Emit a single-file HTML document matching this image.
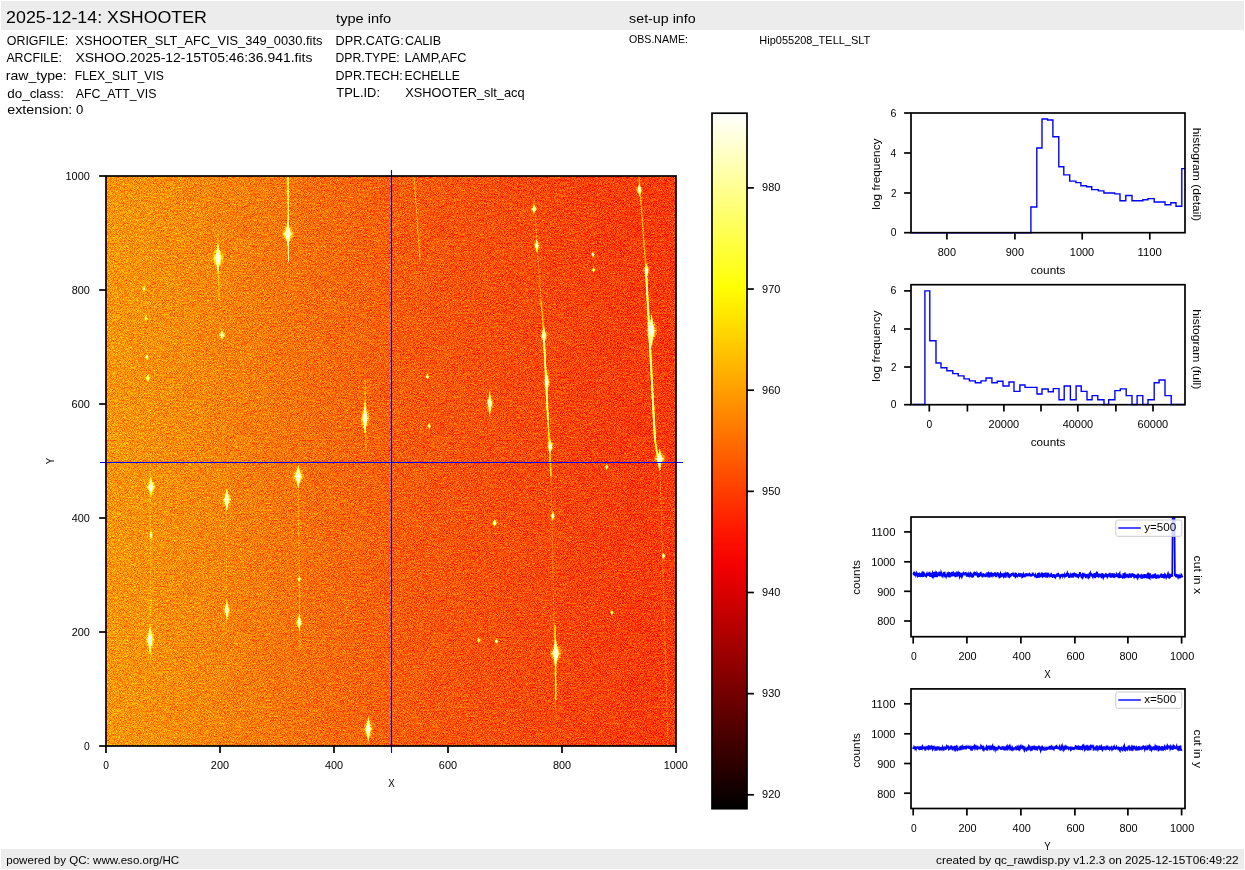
<!DOCTYPE html><html><head><meta charset="utf-8"><style>html,body{margin:0;padding:0;background:#fff;width:1245px;height:870px;overflow:hidden}svg{display:block;will-change:transform}text{font-family:"Liberation Sans",sans-serif}</style></head><body><svg width="1245" height="870" viewBox="0 0 1245 870" font-family="Liberation Sans, sans-serif">
<defs>
<linearGradient id="cbar" x1="0" y1="0" x2="0" y2="1"><stop offset="0.000" stop-color="#ffffff"/><stop offset="0.050" stop-color="#ffffcd"/><stop offset="0.100" stop-color="#ffff9b"/><stop offset="0.150" stop-color="#ffff68"/><stop offset="0.200" stop-color="#ffff36"/><stop offset="0.250" stop-color="#ffff04"/><stop offset="0.300" stop-color="#ffe000"/><stop offset="0.350" stop-color="#ffbf00"/><stop offset="0.400" stop-color="#ff9d00"/><stop offset="0.450" stop-color="#ff7c00"/><stop offset="0.500" stop-color="#ff5a00"/><stop offset="0.550" stop-color="#ff3900"/><stop offset="0.600" stop-color="#ff1700"/><stop offset="0.650" stop-color="#f40000"/><stop offset="0.700" stop-color="#d20000"/><stop offset="0.750" stop-color="#af0000"/><stop offset="0.800" stop-color="#8c0000"/><stop offset="0.850" stop-color="#690000"/><stop offset="0.900" stop-color="#460000"/><stop offset="0.950" stop-color="#230000"/><stop offset="1.000" stop-color="#000000"/></linearGradient>
<linearGradient id="heat" x1="0" y1="0" x2="1" y2="0"><stop offset="0.000" stop-color="#ffbe00"/><stop offset="0.042" stop-color="#ffb000"/><stop offset="0.165" stop-color="#ff9b00"/><stop offset="0.270" stop-color="#ff8a00"/><stop offset="0.411" stop-color="#ff7600"/><stop offset="0.551" stop-color="#ff6600"/><stop offset="0.691" stop-color="#ff5a00"/><stop offset="0.796" stop-color="#ff5000"/><stop offset="0.902" stop-color="#ff4600"/><stop offset="1.000" stop-color="#ff3e00"/></linearGradient>
<radialGradient id="spot"><stop offset="0" stop-color="#ffffff"/><stop offset="0.35" stop-color="#ffff80"/><stop offset="0.7" stop-color="#ffd000" stop-opacity="0.7"/><stop offset="1" stop-color="#ffb000" stop-opacity="0"/></radialGradient>
<linearGradient id="streakv" x1="0" y1="0" x2="0" y2="1"><stop offset="0" stop-color="#ffe040" stop-opacity="0"/><stop offset="0.5" stop-color="#ffff80" stop-opacity="0.9"/><stop offset="1" stop-color="#ffe040" stop-opacity="0"/></linearGradient>
<filter id="noise" x="0" y="0" width="100%" height="100%"><feTurbulence type="fractalNoise" baseFrequency="0.55" numOctaves="2" seed="3" result="t"/><feColorMatrix type="matrix" values="0 0 0 0 1  0 0 0 0 1  0 0 0 0 0.3  0 -1.6 0 0 0.8"/></filter>
<filter id="noise2" x="0" y="0" width="100%" height="100%"><feTurbulence type="fractalNoise" baseFrequency="0.6" numOctaves="2" seed="11" result="t"/><feColorMatrix type="matrix" values="0 0 0 0 0.85  0 0 0 0 0  0 0 0 0 0  0 1.6 0 0 -0.8"/></filter>
<linearGradient id="heatv" x1="0" y1="0" x2="1" y2="0"><stop offset="0.000" stop-color="#979797"/><stop offset="0.042" stop-color="#959595"/><stop offset="0.165" stop-color="#919191"/><stop offset="0.270" stop-color="#8c8c8c"/><stop offset="0.411" stop-color="#858585"/><stop offset="0.551" stop-color="#7f7f7f"/><stop offset="0.691" stop-color="#7b7b7b"/><stop offset="0.796" stop-color="#787878"/><stop offset="0.902" stop-color="#757575"/><stop offset="1.000" stop-color="#737373"/></linearGradient>
<radialGradient id="spotg"><stop offset="0" stop-color="#fff"/><stop offset="0.4" stop-color="#fff" stop-opacity="0.8"/><stop offset="1" stop-color="#fff" stop-opacity="0"/></radialGradient>
<filter id="hm" x="0" y="0" width="570" height="570" filterUnits="userSpaceOnUse" color-interpolation-filters="sRGB"><feTurbulence type="fractalNoise" baseFrequency="1.3" numOctaves="1" seed="7" result="t"/><feColorMatrix in="t" type="matrix" values="1 0 0 0 0  1 0 0 0 0  1 0 0 0 0  0 0 0 0 1" result="tn"/><feComposite in="SourceGraphic" in2="tn" operator="arithmetic" k1="0" k2="1" k3="0.52" k4="-0.2600" result="v"/><feComponentTransfer in="v"><feFuncR type="table" tableValues="0.000 0.043 0.086 0.128 0.171 0.214 0.257 0.300 0.342 0.385 0.428 0.471 0.514 0.556 0.599 0.642 0.685 0.728 0.770 0.813 0.856 0.899 0.942 0.984 1.000 1.000 1.000 1.000 1.000 1.000 1.000 1.000 1.000 1.000 1.000 1.000 1.000 1.000 1.000 1.000 1.000 1.000 1.000 1.000 1.000 1.000 1.000 1.000 1.000 1.000 1.000 1.000 1.000 1.000 1.000 1.000 1.000 1.000 1.000 1.000 1.000 1.000 1.000 1.000 1.000"/><feFuncG type="table" tableValues="0.000 0.000 0.000 0.000 0.000 0.000 0.000 0.000 0.000 0.000 0.000 0.000 0.000 0.000 0.000 0.000 0.000 0.000 0.000 0.000 0.000 0.000 0.000 0.000 0.026 0.067 0.108 0.149 0.190 0.231 0.272 0.313 0.354 0.395 0.436 0.477 0.518 0.559 0.600 0.641 0.682 0.723 0.764 0.805 0.846 0.887 0.928 0.969 1.000 1.000 1.000 1.000 1.000 1.000 1.000 1.000 1.000 1.000 1.000 1.000 1.000 1.000 1.000 1.000 1.000"/><feFuncB type="table" tableValues="0.000 0.000 0.000 0.000 0.000 0.000 0.000 0.000 0.000 0.000 0.000 0.000 0.000 0.000 0.000 0.000 0.000 0.000 0.000 0.000 0.000 0.000 0.000 0.000 0.000 0.000 0.000 0.000 0.000 0.000 0.000 0.000 0.000 0.000 0.000 0.000 0.000 0.000 0.000 0.000 0.000 0.000 0.000 0.000 0.000 0.000 0.000 0.000 0.016 0.077 0.139 0.200 0.262 0.323 0.385 0.446 0.508 0.569 0.631 0.692 0.754 0.815 0.877 0.938 1.000"/><feFuncA type="identity"/></feComponentTransfer></filter>
</defs>
<rect width="1245" height="870" fill="#fff"/>
<rect x="1" y="1" width="1243" height="29" fill="#ececec"/>
<rect x="1" y="849" width="1243" height="20" fill="#ececec"/>
<text x="6.10" y="23.00" font-size="17.00" textLength="200.89" lengthAdjust="spacingAndGlyphs">2025-12-14: XSHOOTER</text>
<text x="336.08" y="22.80" font-size="13.24" textLength="55.15" lengthAdjust="spacingAndGlyphs">type info</text>
<text x="629.10" y="22.70" font-size="13.24" textLength="66.52" lengthAdjust="spacingAndGlyphs">set-up info</text>
<text x="6.81" y="45.20" font-size="13.24" textLength="61.41" lengthAdjust="spacingAndGlyphs">ORIGFILE:</text>
<text x="75.51" y="45.20" font-size="13.24" textLength="246.92" lengthAdjust="spacingAndGlyphs">XSHOOTER_SLT_AFC_VIS_349_0030.fits</text>
<text x="6.38" y="61.50" font-size="13.24" textLength="55.51" lengthAdjust="spacingAndGlyphs">ARCFILE:</text>
<text x="75.49" y="61.50" font-size="13.24" textLength="236.89" lengthAdjust="spacingAndGlyphs">XSHOO.2025-12-15T05:46:36.941.fits</text>
<text x="5.77" y="80.00" font-size="13.24" textLength="61.03" lengthAdjust="spacingAndGlyphs">raw_type:</text>
<text x="74.80" y="80.00" font-size="13.24" textLength="89.14" lengthAdjust="spacingAndGlyphs">FLEX_SLIT_VIS</text>
<text x="7.24" y="97.60" font-size="13.24" textLength="56.72" lengthAdjust="spacingAndGlyphs">do_class:</text>
<text x="75.78" y="97.60" font-size="13.24" textLength="80.75" lengthAdjust="spacingAndGlyphs">AFC_ATT_VIS</text>
<text x="7.19" y="114.10" font-size="13.24" textLength="65.13" lengthAdjust="spacingAndGlyphs">extension:</text>
<text x="75.99" y="114.10" font-size="13.24" textLength="7.33" lengthAdjust="spacingAndGlyphs">0</text>
<text x="335.57" y="44.90" font-size="13.24" textLength="68.12" lengthAdjust="spacingAndGlyphs">DPR.CATG:</text>
<text x="404.96" y="44.90" font-size="13.24" textLength="36.22" lengthAdjust="spacingAndGlyphs">CALIB</text>
<text x="335.60" y="61.80" font-size="13.24" textLength="64.16" lengthAdjust="spacingAndGlyphs">DPR.TYPE:</text>
<text x="404.59" y="61.80" font-size="13.24" textLength="61.86" lengthAdjust="spacingAndGlyphs">LAMP,AFC</text>
<text x="335.58" y="79.70" font-size="13.24" textLength="67.17" lengthAdjust="spacingAndGlyphs">DPR.TECH:</text>
<text x="404.61" y="79.70" font-size="13.24" textLength="55.24" lengthAdjust="spacingAndGlyphs">ECHELLE</text>
<text x="336.31" y="96.80" font-size="13.24" textLength="43.68" lengthAdjust="spacingAndGlyphs">TPL.ID:</text>
<text x="405.31" y="96.80" font-size="13.24" textLength="119.24" lengthAdjust="spacingAndGlyphs">XSHOOTER_slt_acq</text>
<text x="629.00" y="42.80" font-size="11.04" textLength="58.95" lengthAdjust="spacingAndGlyphs">OBS.NAME:</text>
<text x="759.30" y="44.00" font-size="11.04" textLength="111.04" lengthAdjust="spacingAndGlyphs">Hip055208_TELL_SLT</text>
<text x="6.26" y="863.60" font-size="11.04" textLength="172.91" lengthAdjust="spacingAndGlyphs">powered by QC: www.eso.org/HC</text>
<text x="936.09" y="863.60" font-size="11.04" textLength="302.51" lengthAdjust="spacingAndGlyphs">created by qc_rawdisp.py v1.2.3 on 2025-12-15T06:49:22</text>
<svg x="106" y="176" width="570" height="570" viewBox="0 0 570 570" overflow="hidden">
<g filter="url(#hm)">
<rect width="570" height="570" fill="url(#heatv)"/>
<line x1="182.0" y1="0.0" x2="182.5" y2="86.0" stroke="#fff" stroke-width="1.0" opacity="1.0"/>
<line x1="112.0" y1="54.0" x2="113.0" y2="124.0" stroke="#fff" stroke-width="1.0" opacity="0.25"/>
<line x1="259.0" y1="204.0" x2="260.0" y2="274.0" stroke="#fff" stroke-width="1.0" opacity="0.3"/>
<line x1="533.0" y1="0.0" x2="540.0" y2="94.0" stroke="#fff" stroke-width="1.2" opacity="0.35"/>
<line x1="540.0" y1="94.0" x2="549.0" y2="264.0" stroke="#fff" stroke-width="2.0" opacity="0.85"/>
<line x1="549.0" y1="264.0" x2="554.0" y2="294.0" stroke="#fff" stroke-width="1.6" opacity="0.7"/>
<line x1="554.0" y1="294.0" x2="562.0" y2="570.0" stroke="#fff" stroke-width="1.0" opacity="0.15"/>
<line x1="428.0" y1="24.0" x2="435.0" y2="124.0" stroke="#fff" stroke-width="1.0" opacity="0.2"/>
<line x1="435.0" y1="124.0" x2="437.5" y2="154.0" stroke="#fff" stroke-width="1.2" opacity="0.4"/>
<line x1="437.5" y1="154.0" x2="442.0" y2="244.0" stroke="#fff" stroke-width="1.8" opacity="0.8"/>
<line x1="442.0" y1="244.0" x2="445.0" y2="300.0" stroke="#fff" stroke-width="1.4" opacity="0.55"/>
<line x1="445.0" y1="300.0" x2="450.0" y2="544.0" stroke="#fff" stroke-width="1.0" opacity="0.15"/>
<line x1="192.0" y1="294.0" x2="194.0" y2="474.0" stroke="#fff" stroke-width="1.0" opacity="0.18"/>
<line x1="44.0" y1="294.0" x2="45.0" y2="484.0" stroke="#fff" stroke-width="1.0" opacity="0.15"/>
<line x1="449.0" y1="449.0" x2="450.0" y2="524.0" stroke="#fff" stroke-width="1.4" opacity="0.5"/>
<line x1="308.0" y1="0.0" x2="314.0" y2="84.0" stroke="#fff" stroke-width="1.0" opacity="0.3"/>
<line x1="120.0" y1="314.0" x2="121.0" y2="464.0" stroke="#fff" stroke-width="1.0" opacity="0.12"/>
<ellipse cx="182.0" cy="57.8" rx="6.2" ry="9.2" fill="url(#spotg)" opacity="0.50"/>
<polygon points="182.0,44.2 184.5,57.8 182.0,71.4 179.5,57.8" fill="#fff" opacity="0.85"/>
<polygon points="176.5,57.8 182.0,56.6 187.5,57.8 182.0,59.0" fill="#fff" opacity="0.60"/>
<ellipse cx="182.0" cy="57.8" rx="2.5" ry="4.0" fill="#fff" opacity="1.00"/>
<ellipse cx="112.0" cy="82.0" rx="6.2" ry="10.3" fill="url(#spotg)" opacity="0.50"/>
<polygon points="112.0,66.7 114.5,82.0 112.0,97.3 109.5,82.0" fill="#fff" opacity="0.85"/>
<polygon points="106.5,82.0 112.0,80.8 117.5,82.0 112.0,83.2" fill="#fff" opacity="0.60"/>
<ellipse cx="112.0" cy="82.0" rx="2.5" ry="4.5" fill="#fff" opacity="1.00"/>
<ellipse cx="38.0" cy="113.0" rx="2.5" ry="2.3" fill="url(#spotg)" opacity="0.30"/>
<polygon points="38.0,109.6 39.0,113.0 38.0,116.4 37.0,113.0" fill="#fff" opacity="0.51"/>
<ellipse cx="38.0" cy="113.0" rx="1.2" ry="1.2" fill="#fff" opacity="0.60"/>
<ellipse cx="40.0" cy="142.0" rx="2.5" ry="2.3" fill="url(#spotg)" opacity="0.30"/>
<polygon points="40.0,138.6 41.0,142.0 40.0,145.4 39.0,142.0" fill="#fff" opacity="0.51"/>
<ellipse cx="40.0" cy="142.0" rx="1.2" ry="1.2" fill="#fff" opacity="0.60"/>
<ellipse cx="41.0" cy="181.0" rx="2.5" ry="2.3" fill="url(#spotg)" opacity="0.30"/>
<polygon points="41.0,177.6 42.0,181.0 41.0,184.4 40.0,181.0" fill="#fff" opacity="0.51"/>
<ellipse cx="41.0" cy="181.0" rx="1.2" ry="1.2" fill="#fff" opacity="0.60"/>
<ellipse cx="42.0" cy="202.0" rx="3.1" ry="2.9" fill="url(#spotg)" opacity="0.40"/>
<polygon points="42.0,197.8 43.2,202.0 42.0,206.2 40.8,202.0" fill="#fff" opacity="0.68"/>
<ellipse cx="42.0" cy="202.0" rx="1.2" ry="1.2" fill="#fff" opacity="0.80"/>
<ellipse cx="116.0" cy="159.0" rx="3.8" ry="3.4" fill="url(#spotg)" opacity="0.45"/>
<polygon points="116.0,153.9 117.5,159.0 116.0,164.1 114.5,159.0" fill="#fff" opacity="0.77"/>
<ellipse cx="116.0" cy="159.0" rx="1.5" ry="1.5" fill="#fff" opacity="0.90"/>
<ellipse cx="259.0" cy="242.0" rx="5.0" ry="11.5" fill="url(#spotg)" opacity="0.50"/>
<polygon points="259.0,225.0 261.0,242.0 259.0,259.0 257.0,242.0" fill="#fff" opacity="0.85"/>
<polygon points="254.6,242.0 259.0,240.8 263.4,242.0 259.0,243.2" fill="#fff" opacity="0.60"/>
<ellipse cx="259.0" cy="242.0" rx="2.0" ry="5.0" fill="#fff" opacity="1.00"/>
<ellipse cx="428.0" cy="33.0" rx="3.8" ry="3.4" fill="url(#spotg)" opacity="0.45"/>
<polygon points="428.0,27.9 429.5,33.0 428.0,38.1 426.5,33.0" fill="#fff" opacity="0.77"/>
<ellipse cx="428.0" cy="33.0" rx="1.5" ry="1.5" fill="#fff" opacity="0.90"/>
<ellipse cx="430.8" cy="69.5" rx="3.8" ry="4.6" fill="url(#spotg)" opacity="0.45"/>
<polygon points="430.8,62.7 432.3,69.5 430.8,76.3 429.3,69.5" fill="#fff" opacity="0.77"/>
<ellipse cx="430.8" cy="69.5" rx="1.5" ry="2.0" fill="#fff" opacity="0.90"/>
<ellipse cx="533.4" cy="13.6" rx="3.8" ry="4.6" fill="url(#spotg)" opacity="0.45"/>
<polygon points="533.4,6.8 534.9,13.6 533.4,20.4 531.9,13.6" fill="#fff" opacity="0.77"/>
<ellipse cx="533.4" cy="13.6" rx="1.5" ry="2.0" fill="#fff" opacity="0.90"/>
<ellipse cx="540.6" cy="94.5" rx="3.8" ry="5.8" fill="url(#spotg)" opacity="0.45"/>
<polygon points="540.6,86.0 542.1,94.5 540.6,103.0 539.1,94.5" fill="#fff" opacity="0.77"/>
<ellipse cx="540.6" cy="94.5" rx="1.5" ry="2.5" fill="#fff" opacity="0.90"/>
<ellipse cx="545.6" cy="154.4" rx="6.2" ry="11.5" fill="url(#spotg)" opacity="0.50"/>
<polygon points="545.6,137.4 548.1,154.4 545.6,171.4 543.1,154.4" fill="#fff" opacity="0.85"/>
<polygon points="540.1,154.4 545.6,153.2 551.1,154.4 545.6,155.6" fill="#fff" opacity="0.60"/>
<ellipse cx="545.6" cy="154.4" rx="2.5" ry="5.0" fill="#fff" opacity="1.00"/>
<ellipse cx="553.8" cy="282.7" rx="6.2" ry="6.9" fill="url(#spotg)" opacity="0.50"/>
<polygon points="553.8,272.5 556.3,282.7 553.8,292.9 551.3,282.7" fill="#fff" opacity="0.85"/>
<polygon points="548.3,282.7 553.8,281.5 559.3,282.7 553.8,283.9" fill="#fff" opacity="0.60"/>
<ellipse cx="553.8" cy="282.7" rx="2.5" ry="3.0" fill="#fff" opacity="1.00"/>
<ellipse cx="487.0" cy="78.5" rx="2.5" ry="2.3" fill="url(#spotg)" opacity="0.35"/>
<polygon points="487.0,75.1 488.0,78.5 487.0,81.9 486.0,78.5" fill="#fff" opacity="0.59"/>
<ellipse cx="487.0" cy="78.5" rx="1.2" ry="1.2" fill="#fff" opacity="0.70"/>
<ellipse cx="487.6" cy="94.0" rx="2.5" ry="2.3" fill="url(#spotg)" opacity="0.30"/>
<polygon points="487.6,90.6 488.6,94.0 487.6,97.4 486.6,94.0" fill="#fff" opacity="0.51"/>
<ellipse cx="487.6" cy="94.0" rx="1.2" ry="1.2" fill="#fff" opacity="0.60"/>
<ellipse cx="438.0" cy="159.7" rx="3.8" ry="6.9" fill="url(#spotg)" opacity="0.50"/>
<polygon points="438.0,149.5 439.5,159.7 438.0,169.9 436.5,159.7" fill="#fff" opacity="0.85"/>
<ellipse cx="438.0" cy="159.7" rx="1.5" ry="3.0" fill="#fff" opacity="1.00"/>
<ellipse cx="440.8" cy="206.0" rx="3.8" ry="8.0" fill="url(#spotg)" opacity="0.50"/>
<polygon points="440.8,194.1 442.3,206.0 440.8,217.9 439.3,206.0" fill="#fff" opacity="0.85"/>
<ellipse cx="440.8" cy="206.0" rx="1.5" ry="3.5" fill="#fff" opacity="1.00"/>
<ellipse cx="444.3" cy="270.2" rx="3.8" ry="5.8" fill="url(#spotg)" opacity="0.50"/>
<polygon points="444.3,261.7 445.8,270.2 444.3,278.7 442.8,270.2" fill="#fff" opacity="0.85"/>
<ellipse cx="444.3" cy="270.2" rx="1.5" ry="2.5" fill="#fff" opacity="1.00"/>
<ellipse cx="383.8" cy="227.4" rx="3.8" ry="9.2" fill="url(#spotg)" opacity="0.50"/>
<polygon points="383.8,213.8 385.3,227.4 383.8,241.0 382.3,227.4" fill="#fff" opacity="0.85"/>
<ellipse cx="383.8" cy="227.4" rx="1.5" ry="4.0" fill="#fff" opacity="1.00"/>
<ellipse cx="321.4" cy="200.7" rx="2.5" ry="2.3" fill="url(#spotg)" opacity="0.30"/>
<polygon points="321.4,197.3 322.4,200.7 321.4,204.1 320.4,200.7" fill="#fff" opacity="0.51"/>
<ellipse cx="321.4" cy="200.7" rx="1.2" ry="1.2" fill="#fff" opacity="0.60"/>
<ellipse cx="323.2" cy="249.9" rx="2.5" ry="2.3" fill="url(#spotg)" opacity="0.35"/>
<polygon points="323.2,246.5 324.2,249.9 323.2,253.3 322.2,249.9" fill="#fff" opacity="0.59"/>
<ellipse cx="323.2" cy="249.9" rx="1.2" ry="1.2" fill="#fff" opacity="0.70"/>
<ellipse cx="45.0" cy="310.7" rx="5.0" ry="6.9" fill="url(#spotg)" opacity="0.50"/>
<polygon points="45.0,300.5 47.0,310.7 45.0,320.9 43.0,310.7" fill="#fff" opacity="0.85"/>
<polygon points="40.6,310.7 45.0,309.5 49.4,310.7 45.0,311.9" fill="#fff" opacity="0.60"/>
<ellipse cx="45.0" cy="310.7" rx="2.0" ry="3.0" fill="#fff" opacity="1.00"/>
<ellipse cx="120.9" cy="323.8" rx="5.0" ry="8.0" fill="url(#spotg)" opacity="0.50"/>
<polygon points="120.9,311.9 122.9,323.8 120.9,335.7 118.9,323.8" fill="#fff" opacity="0.85"/>
<polygon points="116.5,323.8 120.9,322.6 125.3,323.8 120.9,325.0" fill="#fff" opacity="0.60"/>
<ellipse cx="120.9" cy="323.8" rx="2.0" ry="3.5" fill="#fff" opacity="1.00"/>
<ellipse cx="192.3" cy="300.4" rx="6.2" ry="8.0" fill="url(#spotg)" opacity="0.50"/>
<polygon points="192.3,288.5 194.8,300.4 192.3,312.3 189.8,300.4" fill="#fff" opacity="0.85"/>
<polygon points="186.8,300.4 192.3,299.2 197.8,300.4 192.3,301.6" fill="#fff" opacity="0.60"/>
<ellipse cx="192.3" cy="300.4" rx="2.5" ry="3.5" fill="#fff" opacity="1.00"/>
<ellipse cx="45.0" cy="359.0" rx="2.5" ry="3.4" fill="url(#spotg)" opacity="0.35"/>
<polygon points="45.0,353.9 46.0,359.0 45.0,364.1 44.0,359.0" fill="#fff" opacity="0.59"/>
<ellipse cx="45.0" cy="359.0" rx="1.2" ry="1.5" fill="#fff" opacity="0.70"/>
<ellipse cx="120.9" cy="434.2" rx="3.8" ry="6.9" fill="url(#spotg)" opacity="0.50"/>
<polygon points="120.9,424.0 122.4,434.2 120.9,444.4 119.4,434.2" fill="#fff" opacity="0.85"/>
<ellipse cx="120.9" cy="434.2" rx="1.5" ry="3.0" fill="#fff" opacity="1.00"/>
<ellipse cx="193.3" cy="446.2" rx="3.8" ry="5.8" fill="url(#spotg)" opacity="0.50"/>
<polygon points="193.3,437.7 194.8,446.2 193.3,454.7 191.8,446.2" fill="#fff" opacity="0.85"/>
<ellipse cx="193.3" cy="446.2" rx="1.5" ry="2.5" fill="#fff" opacity="1.00"/>
<ellipse cx="44.0" cy="463.5" rx="5.0" ry="10.3" fill="url(#spotg)" opacity="0.50"/>
<polygon points="44.0,448.2 46.0,463.5 44.0,478.8 42.0,463.5" fill="#fff" opacity="0.85"/>
<polygon points="39.6,463.5 44.0,462.3 48.4,463.5 44.0,464.7" fill="#fff" opacity="0.60"/>
<ellipse cx="44.0" cy="463.5" rx="2.0" ry="4.5" fill="#fff" opacity="1.00"/>
<ellipse cx="193.3" cy="403.0" rx="2.5" ry="2.3" fill="url(#spotg)" opacity="0.30"/>
<polygon points="193.3,399.6 194.3,403.0 193.3,406.4 192.3,403.0" fill="#fff" opacity="0.51"/>
<ellipse cx="193.3" cy="403.0" rx="1.2" ry="1.2" fill="#fff" opacity="0.60"/>
<ellipse cx="262.3" cy="553.0" rx="5.0" ry="9.2" fill="url(#spotg)" opacity="0.50"/>
<polygon points="262.3,539.4 264.3,553.0 262.3,566.6 260.3,553.0" fill="#fff" opacity="0.85"/>
<polygon points="257.9,553.0 262.3,551.8 266.7,553.0 262.3,554.2" fill="#fff" opacity="0.60"/>
<ellipse cx="262.3" cy="553.0" rx="2.0" ry="4.0" fill="#fff" opacity="1.00"/>
<ellipse cx="388.7" cy="346.9" rx="3.1" ry="2.9" fill="url(#spotg)" opacity="0.45"/>
<polygon points="388.7,342.6 389.9,346.9 388.7,351.1 387.4,346.9" fill="#fff" opacity="0.77"/>
<ellipse cx="388.7" cy="346.9" rx="1.2" ry="1.2" fill="#fff" opacity="0.90"/>
<ellipse cx="446.9" cy="340.0" rx="3.1" ry="3.4" fill="url(#spotg)" opacity="0.45"/>
<polygon points="446.9,334.9 448.1,340.0 446.9,345.1 445.6,340.0" fill="#fff" opacity="0.77"/>
<ellipse cx="446.9" cy="340.0" rx="1.2" ry="1.5" fill="#fff" opacity="0.90"/>
<ellipse cx="557.6" cy="380.0" rx="2.5" ry="2.3" fill="url(#spotg)" opacity="0.45"/>
<polygon points="557.6,376.6 558.6,380.0 557.6,383.4 556.6,380.0" fill="#fff" opacity="0.77"/>
<ellipse cx="557.6" cy="380.0" rx="1.2" ry="1.2" fill="#fff" opacity="0.90"/>
<ellipse cx="505.9" cy="436.6" rx="2.5" ry="2.3" fill="url(#spotg)" opacity="0.30"/>
<polygon points="505.9,433.2 506.9,436.6 505.9,440.0 504.9,436.6" fill="#fff" opacity="0.51"/>
<ellipse cx="505.9" cy="436.6" rx="1.2" ry="1.2" fill="#fff" opacity="0.60"/>
<ellipse cx="390.4" cy="465.2" rx="2.5" ry="2.3" fill="url(#spotg)" opacity="0.35"/>
<polygon points="390.4,461.8 391.4,465.2 390.4,468.6 389.4,465.2" fill="#fff" opacity="0.59"/>
<ellipse cx="390.4" cy="465.2" rx="1.2" ry="1.2" fill="#fff" opacity="0.70"/>
<ellipse cx="372.8" cy="464.2" rx="2.5" ry="2.3" fill="url(#spotg)" opacity="0.30"/>
<polygon points="372.8,460.8 373.8,464.2 372.8,467.6 371.8,464.2" fill="#fff" opacity="0.51"/>
<ellipse cx="372.8" cy="464.2" rx="1.2" ry="1.2" fill="#fff" opacity="0.60"/>
<ellipse cx="449.7" cy="477.3" rx="6.2" ry="10.3" fill="url(#spotg)" opacity="0.50"/>
<polygon points="449.7,462.0 452.2,477.3 449.7,492.6 447.2,477.3" fill="#fff" opacity="0.85"/>
<polygon points="444.2,477.3 449.7,476.1 455.2,477.3 449.7,478.5" fill="#fff" opacity="0.60"/>
<ellipse cx="449.7" cy="477.3" rx="2.5" ry="4.5" fill="#fff" opacity="1.00"/>
<ellipse cx="500.7" cy="291.0" rx="2.5" ry="2.3" fill="url(#spotg)" opacity="0.35"/>
<polygon points="500.7,287.6 501.7,291.0 500.7,294.4 499.7,291.0" fill="#fff" opacity="0.59"/>
<ellipse cx="500.7" cy="291.0" rx="1.2" ry="1.2" fill="#fff" opacity="0.70"/>
</g>
</svg>
<line x1="391.50" y1="170.00" x2="391.50" y2="753.00" stroke="#0000ff" stroke-width="1.1"/>
<line x1="100.00" y1="462.50" x2="683.00" y2="462.50" stroke="#0000ff" stroke-width="1.1"/>
<rect x="106.00" y="176.00" width="570.00" height="570.00" fill="none" stroke="#000" stroke-width="1.7"/>
<line x1="99.10" y1="746.00" x2="106.00" y2="746.00" stroke="#000" stroke-width="1.7"/>
<text x="84.10" y="749.54" font-size="10.30" textLength="5.70" lengthAdjust="spacingAndGlyphs">0</text>
<line x1="106.00" y1="746.00" x2="106.00" y2="752.90" stroke="#000" stroke-width="1.7"/>
<text x="103.15" y="769.20" font-size="10.30" textLength="5.70" lengthAdjust="spacingAndGlyphs">0</text>
<line x1="99.10" y1="632.00" x2="106.00" y2="632.00" stroke="#000" stroke-width="1.7"/>
<text x="71.66" y="635.54" font-size="10.30" textLength="18.17" lengthAdjust="spacingAndGlyphs">200</text>
<line x1="220.00" y1="746.00" x2="220.00" y2="752.90" stroke="#000" stroke-width="1.7"/>
<text x="210.85" y="769.20" font-size="10.30" textLength="18.17" lengthAdjust="spacingAndGlyphs">200</text>
<line x1="99.10" y1="518.00" x2="106.00" y2="518.00" stroke="#000" stroke-width="1.7"/>
<text x="71.72" y="521.54" font-size="10.30" textLength="18.11" lengthAdjust="spacingAndGlyphs">400</text>
<line x1="334.00" y1="746.00" x2="334.00" y2="752.90" stroke="#000" stroke-width="1.7"/>
<text x="325.03" y="769.20" font-size="10.30" textLength="18.11" lengthAdjust="spacingAndGlyphs">400</text>
<line x1="99.10" y1="404.00" x2="106.00" y2="404.00" stroke="#000" stroke-width="1.7"/>
<text x="71.62" y="407.54" font-size="10.30" textLength="18.21" lengthAdjust="spacingAndGlyphs">600</text>
<line x1="448.00" y1="746.00" x2="448.00" y2="752.90" stroke="#000" stroke-width="1.7"/>
<text x="438.83" y="769.20" font-size="10.30" textLength="18.21" lengthAdjust="spacingAndGlyphs">600</text>
<line x1="99.10" y1="290.00" x2="106.00" y2="290.00" stroke="#000" stroke-width="1.7"/>
<text x="71.68" y="293.54" font-size="10.30" textLength="18.14" lengthAdjust="spacingAndGlyphs">800</text>
<line x1="562.00" y1="746.00" x2="562.00" y2="752.90" stroke="#000" stroke-width="1.7"/>
<text x="552.90" y="769.20" font-size="10.30" textLength="18.14" lengthAdjust="spacingAndGlyphs">800</text>
<line x1="99.10" y1="176.00" x2="106.00" y2="176.00" stroke="#000" stroke-width="1.7"/>
<text x="65.55" y="179.54" font-size="10.30" textLength="24.28" lengthAdjust="spacingAndGlyphs">1000</text>
<line x1="676.00" y1="746.00" x2="676.00" y2="752.90" stroke="#000" stroke-width="1.7"/>
<text x="663.66" y="769.20" font-size="10.30" textLength="24.28" lengthAdjust="spacingAndGlyphs">1000</text>
<text x="388.25" y="786.70" font-size="10.30" textLength="6.49" lengthAdjust="spacingAndGlyphs">X</text>
<g transform="translate(53.90,461.00) rotate(-90)"><text x="-3.20" y="0.00" font-size="10.30" textLength="6.40" lengthAdjust="spacingAndGlyphs">Y</text></g>
<rect x="712" y="113.2" width="35" height="695.5" fill="url(#cbar)"/>
<rect x="712.00" y="113.20" width="35.00" height="695.50" fill="none" stroke="#000" stroke-width="1.7"/>
<line x1="747.00" y1="794.80" x2="753.90" y2="794.80" stroke="#000" stroke-width="1.7"/>
<text x="762.09" y="798.34" font-size="10.30" textLength="18.23" lengthAdjust="spacingAndGlyphs">920</text>
<line x1="747.00" y1="693.65" x2="753.90" y2="693.65" stroke="#000" stroke-width="1.7"/>
<text x="762.09" y="697.19" font-size="10.30" textLength="18.23" lengthAdjust="spacingAndGlyphs">930</text>
<line x1="747.00" y1="592.50" x2="753.90" y2="592.50" stroke="#000" stroke-width="1.7"/>
<text x="762.09" y="596.04" font-size="10.30" textLength="18.23" lengthAdjust="spacingAndGlyphs">940</text>
<line x1="747.00" y1="491.35" x2="753.90" y2="491.35" stroke="#000" stroke-width="1.7"/>
<text x="762.09" y="494.89" font-size="10.30" textLength="18.23" lengthAdjust="spacingAndGlyphs">950</text>
<line x1="747.00" y1="390.20" x2="753.90" y2="390.20" stroke="#000" stroke-width="1.7"/>
<text x="762.09" y="393.74" font-size="10.30" textLength="18.23" lengthAdjust="spacingAndGlyphs">960</text>
<line x1="747.00" y1="289.05" x2="753.90" y2="289.05" stroke="#000" stroke-width="1.7"/>
<text x="762.09" y="292.59" font-size="10.30" textLength="18.23" lengthAdjust="spacingAndGlyphs">970</text>
<line x1="747.00" y1="187.90" x2="753.90" y2="187.90" stroke="#000" stroke-width="1.7"/>
<text x="762.09" y="191.44" font-size="10.30" textLength="18.23" lengthAdjust="spacingAndGlyphs">980</text>
<polyline fill="none" stroke="#0000ff" stroke-width="1.39" stroke-linejoin="miter" points="911.0,232.7 1030.9,232.7 1030.9,207.0 1036.8,207.0 1036.8,148.0 1042.0,148.0 1042.0,119.0 1047.6,119.0 1047.6,120.0 1052.9,120.0 1052.9,136.8 1058.8,136.8 1058.8,166.8 1063.8,166.8 1063.8,174.9 1069.7,174.9 1069.7,181.1 1075.9,181.1 1075.9,182.6 1080.9,182.6 1080.9,185.7 1086.5,185.7 1086.5,186.8 1091.7,186.8 1091.7,189.6 1098.4,189.6 1098.4,190.9 1103.9,190.9 1103.9,193.0 1114.7,193.0 1114.7,193.9 1120.0,193.9 1120.0,200.7 1125.8,200.7 1125.8,195.5 1132.0,195.5 1132.0,200.7 1142.9,200.7 1142.9,199.7 1148.0,199.7 1148.0,198.6 1154.2,198.6 1154.2,202.0 1165.0,202.0 1165.0,204.8 1170.8,204.8 1170.8,202.8 1176.0,202.8 1176.0,206.2 1181.8,206.2 1181.8,168.6 1185.0,168.6"/>
<rect x="911.00" y="113.00" width="274.00" height="119.70" fill="none" stroke="#000" stroke-width="1.7"/>
<line x1="904.10" y1="113.00" x2="911.00" y2="113.00" stroke="#000" stroke-width="1.7"/>
<text x="890.57" y="116.54" font-size="10.30" textLength="5.90" lengthAdjust="spacingAndGlyphs">6</text>
<line x1="904.10" y1="153.00" x2="911.00" y2="153.00" stroke="#000" stroke-width="1.7"/>
<text x="890.60" y="156.54" font-size="10.30" textLength="5.70" lengthAdjust="spacingAndGlyphs">4</text>
<line x1="904.10" y1="193.00" x2="911.00" y2="193.00" stroke="#000" stroke-width="1.7"/>
<text x="891.00" y="196.54" font-size="10.30" textLength="5.49" lengthAdjust="spacingAndGlyphs">2</text>
<line x1="904.10" y1="232.70" x2="911.00" y2="232.70" stroke="#000" stroke-width="1.7"/>
<text x="890.70" y="236.24" font-size="10.30" textLength="5.70" lengthAdjust="spacingAndGlyphs">0</text>
<line x1="946.90" y1="232.70" x2="946.90" y2="239.60" stroke="#000" stroke-width="1.7"/>
<text x="937.80" y="255.90" font-size="10.30" textLength="18.14" lengthAdjust="spacingAndGlyphs">800</text>
<line x1="1014.90" y1="232.70" x2="1014.90" y2="239.60" stroke="#000" stroke-width="1.7"/>
<text x="1005.74" y="255.90" font-size="10.30" textLength="18.23" lengthAdjust="spacingAndGlyphs">900</text>
<line x1="1082.20" y1="232.70" x2="1082.20" y2="239.60" stroke="#000" stroke-width="1.7"/>
<text x="1069.86" y="255.90" font-size="10.30" textLength="24.28" lengthAdjust="spacingAndGlyphs">1000</text>
<line x1="1149.80" y1="232.70" x2="1149.80" y2="239.60" stroke="#000" stroke-width="1.7"/>
<text x="1137.46" y="255.90" font-size="10.30" textLength="24.28" lengthAdjust="spacingAndGlyphs">1100</text>
<text x="1030.70" y="273.80" font-size="11.04" textLength="34.67" lengthAdjust="spacingAndGlyphs">counts</text>
<g transform="translate(880.00,173.70) rotate(-90)"><text x="-36.00" y="0.00" font-size="11.04" textLength="71.22" lengthAdjust="spacingAndGlyphs">log frequency</text></g>
<g transform="translate(1193.00,174.50) rotate(90)"><text x="-46.69" y="0.00" font-size="11.04" textLength="93.30" lengthAdjust="spacingAndGlyphs">histogram (detail)</text></g>
<polyline fill="none" stroke="#0000ff" stroke-width="1.39" points="912.8,404.5 924.9,404.5 924.9,290.9 929.8,290.9 929.8,340.8 936.0,340.8 936.0,363.0 941.0,363.0 941.0,367.7 946.9,367.7 946.9,370.8 952.8,370.8 952.8,373.6 958.2,373.6 958.2,375.9 964.0,375.9 964.0,378.9 969.4,378.9 969.4,380.9 975.3,380.9 975.3,382.7 981.0,382.7 981.0,380.9 986.0,380.9 986.0,378.0 991.9,378.0 991.9,382.7 997.3,382.7 997.3,381.2 1003.0,381.2 1003.0,386.0 1009.0,386.0 1009.0,382.0 1014.0,382.0 1014.0,391.4 1019.9,391.4 1019.9,385.0 1025.0,385.0 1025.0,387.4 1037.0,387.4 1037.0,394.0 1042.0,394.0 1042.0,389.0 1048.2,389.0 1048.2,391.7 1053.3,391.7 1053.3,388.6 1059.0,388.6 1059.0,399.8 1064.2,399.8 1064.2,386.0 1070.4,386.0 1070.4,399.8 1076.1,399.8 1076.1,386.0 1081.2,386.0 1081.2,391.4 1087.0,391.4 1087.0,399.8 1092.1,399.8 1092.1,395.6 1097.8,395.6 1097.8,399.8 1104.0,399.8 1104.0,404.5 1108.7,404.5 1108.7,399.8 1114.9,399.8 1114.9,390.6 1120.3,390.6 1120.3,388.9 1126.2,388.9 1126.2,395.6 1132.0,395.6 1132.0,404.5 1137.1,404.5 1137.1,395.6 1142.8,395.6 1142.8,404.5 1148.0,404.5 1148.0,399.8 1154.2,399.8 1154.2,382.7 1159.1,382.7 1159.1,380.0 1165.0,380.0 1165.0,395.6 1171.2,395.6 1171.2,404.5 1185.0,404.5"/>
<rect x="911.00" y="284.70" width="274.00" height="120.00" fill="none" stroke="#000" stroke-width="1.7"/>
<line x1="904.10" y1="290.90" x2="911.00" y2="290.90" stroke="#000" stroke-width="1.7"/>
<text x="890.57" y="294.44" font-size="10.30" textLength="5.90" lengthAdjust="spacingAndGlyphs">6</text>
<line x1="904.10" y1="329.00" x2="911.00" y2="329.00" stroke="#000" stroke-width="1.7"/>
<text x="890.60" y="332.54" font-size="10.30" textLength="5.70" lengthAdjust="spacingAndGlyphs">4</text>
<line x1="904.10" y1="367.00" x2="911.00" y2="367.00" stroke="#000" stroke-width="1.7"/>
<text x="891.00" y="370.54" font-size="10.30" textLength="5.49" lengthAdjust="spacingAndGlyphs">2</text>
<line x1="904.10" y1="404.70" x2="911.00" y2="404.70" stroke="#000" stroke-width="1.7"/>
<text x="890.70" y="408.24" font-size="10.30" textLength="5.70" lengthAdjust="spacingAndGlyphs">0</text>
<line x1="929.30" y1="404.70" x2="929.30" y2="411.60" stroke="#000" stroke-width="1.7"/>
<text x="926.45" y="427.90" font-size="10.30" textLength="5.70" lengthAdjust="spacingAndGlyphs">0</text>
<line x1="967.40" y1="404.70" x2="967.40" y2="411.60" stroke="#000" stroke-width="1.7"/>
<line x1="1003.90" y1="404.70" x2="1003.90" y2="411.60" stroke="#000" stroke-width="1.7"/>
<text x="988.57" y="427.90" font-size="10.30" textLength="30.54" lengthAdjust="spacingAndGlyphs">20000</text>
<line x1="1041.00" y1="404.70" x2="1041.00" y2="411.60" stroke="#000" stroke-width="1.7"/>
<line x1="1077.80" y1="404.70" x2="1077.80" y2="411.60" stroke="#000" stroke-width="1.7"/>
<text x="1062.65" y="427.90" font-size="10.30" textLength="30.48" lengthAdjust="spacingAndGlyphs">40000</text>
<line x1="1115.90" y1="404.70" x2="1115.90" y2="411.60" stroke="#000" stroke-width="1.7"/>
<line x1="1153.00" y1="404.70" x2="1153.00" y2="411.60" stroke="#000" stroke-width="1.7"/>
<text x="1137.64" y="427.90" font-size="10.30" textLength="30.58" lengthAdjust="spacingAndGlyphs">60000</text>
<text x="1030.70" y="445.80" font-size="11.04" textLength="34.67" lengthAdjust="spacingAndGlyphs">counts</text>
<g transform="translate(880.00,345.70) rotate(-90)"><text x="-36.00" y="0.00" font-size="11.04" textLength="71.22" lengthAdjust="spacingAndGlyphs">log frequency</text></g>
<g transform="translate(1193.00,349.30) rotate(90)"><text x="-40.08" y="0.00" font-size="11.04" textLength="80.08" lengthAdjust="spacingAndGlyphs">histogram (full)</text></g>
<svg x="911" y="517" width="274" height="119.7" overflow="hidden">
<polyline fill="none" stroke="#0000ff" stroke-width="1.75" points="2.2,55.7 2.5,55.8 2.7,58.2 3.0,54.7 3.3,57.1 3.5,54.7 3.8,58.8 4.1,57.6 4.4,59.1 4.6,56.6 4.9,57.9 5.2,56.9 5.4,56.3 5.7,57.5 6.0,55.6 6.2,56.9 6.5,58.3 6.8,57.4 7.0,56.8 7.3,59.9 7.6,57.4 7.9,56.5 8.1,57.6 8.4,56.6 8.7,56.8 8.9,56.9 9.2,60.0 9.5,57.4 9.7,57.6 10.0,58.3 10.3,60.0 10.5,57.1 10.8,56.5 11.1,60.0 11.3,55.4 11.6,56.9 11.9,58.3 12.2,60.0 12.4,56.1 12.7,54.8 13.0,58.3 13.2,56.7 13.5,56.9 13.8,58.0 14.0,57.7 14.3,57.8 14.6,56.8 14.8,59.1 15.1,59.4 15.4,57.4 15.7,56.8 15.9,58.4 16.2,58.0 16.5,56.0 16.7,56.8 17.0,58.8 17.3,57.3 17.5,57.0 17.8,57.7 18.1,57.4 18.3,57.4 18.6,54.8 18.9,59.8 19.2,57.7 19.4,56.2 19.7,58.8 20.0,57.8 20.2,57.5 20.5,58.8 20.8,60.0 21.0,58.2 21.3,59.6 21.6,60.0 21.8,56.1 22.1,56.7 22.4,58.5 22.6,55.1 22.9,57.1 23.2,59.2 23.5,58.9 23.7,58.2 24.0,54.9 24.3,60.1 24.5,58.2 24.8,58.5 25.1,58.1 25.3,55.2 25.6,55.5 25.9,55.8 26.1,60.1 26.4,56.4 26.7,57.2 27.0,57.1 27.2,58.3 27.5,58.2 27.8,57.8 28.0,55.8 28.3,54.9 28.6,57.7 28.8,57.9 29.1,59.2 29.4,57.4 29.6,56.7 29.9,58.1 30.2,55.4 30.5,56.1 30.7,56.2 31.0,57.9 31.3,60.1 31.5,58.5 31.8,59.1 32.1,57.8 32.3,57.9 32.6,56.9 32.9,57.1 33.1,54.9 33.4,55.9 33.7,55.8 33.9,58.7 34.2,58.4 34.5,59.1 34.8,59.6 35.0,57.1 35.3,59.0 35.6,60.1 35.8,57.5 36.1,59.0 36.4,57.3 36.6,55.4 36.9,57.7 37.2,56.4 37.4,57.7 37.7,56.9 38.0,58.0 38.3,55.0 38.5,60.2 38.8,59.4 39.1,57.1 39.3,56.3 39.6,57.6 39.9,58.5 40.1,58.2 40.4,58.1 40.7,55.0 40.9,56.1 41.2,59.4 41.5,57.9 41.8,55.5 42.0,56.4 42.3,55.6 42.6,56.2 42.8,59.2 43.1,57.3 43.4,59.1 43.6,57.9 43.9,55.6 44.2,56.7 44.4,60.2 44.7,56.6 45.0,56.2 45.2,59.3 45.5,57.7 45.8,57.6 46.1,59.6 46.3,55.2 46.6,58.2 46.9,56.2 47.1,55.7 47.4,56.5 47.7,59.2 47.9,57.4 48.2,55.1 48.5,56.1 48.7,59.7 49.0,59.1 49.3,56.1 49.6,60.2 49.8,57.1 50.1,56.0 50.4,57.5 50.6,58.9 50.9,59.9 51.2,59.1 51.4,57.1 51.7,56.9 52.0,55.7 52.2,57.6 52.5,56.8 52.8,58.0 53.1,55.9 53.3,57.0 53.6,56.5 53.9,56.0 54.1,56.0 54.4,56.3 54.7,56.1 54.9,58.5 55.2,57.8 55.5,55.9 55.7,58.4 56.0,58.1 56.3,59.7 56.6,57.4 56.8,57.4 57.1,56.8 57.4,57.9 57.6,58.4 57.9,58.0 58.2,57.4 58.4,58.5 58.7,57.8 59.0,58.1 59.2,56.4 59.5,58.0 59.8,56.3 60.0,56.6 60.3,58.0 60.6,60.3 60.9,59.1 61.1,57.7 61.4,57.5 61.7,59.1 61.9,59.6 62.2,59.4 62.5,57.5 62.7,58.0 63.0,57.3 63.3,57.4 63.5,56.6 63.8,57.4 64.1,55.2 64.4,56.1 64.6,58.3 64.9,56.5 65.2,58.5 65.4,56.0 65.7,57.3 66.0,58.3 66.2,56.3 66.5,56.8 66.8,60.4 67.0,56.8 67.3,56.8 67.6,57.0 67.9,57.8 68.1,57.7 68.4,59.1 68.7,58.9 68.9,57.2 69.2,57.3 69.5,55.8 69.7,55.7 70.0,56.8 70.3,58.8 70.5,58.0 70.8,58.9 71.1,59.1 71.3,57.6 71.6,60.4 71.9,57.1 72.2,57.0 72.4,57.2 72.7,59.4 73.0,57.6 73.2,56.8 73.5,58.4 73.8,59.4 74.0,57.7 74.3,57.5 74.6,59.3 74.8,59.2 75.1,59.1 75.4,56.8 75.7,58.2 75.9,58.3 76.2,55.4 76.5,59.5 76.7,58.0 77.0,57.4 77.3,60.5 77.5,58.1 77.8,56.9 78.1,57.8 78.3,58.6 78.6,59.0 78.9,57.8 79.2,56.7 79.4,56.9 79.7,56.7 80.0,56.4 80.2,57.8 80.5,57.2 80.8,58.0 81.0,56.7 81.3,56.7 81.6,57.6 81.8,57.4 82.1,59.5 82.4,56.6 82.6,58.2 82.9,57.8 83.2,56.1 83.5,58.9 83.7,58.1 84.0,55.3 84.3,58.7 84.5,59.2 84.8,56.8 85.1,60.2 85.3,58.1 85.6,56.3 85.9,58.7 86.1,57.4 86.4,56.1 86.7,55.3 87.0,58.3 87.2,56.9 87.5,58.8 87.8,58.5 88.0,57.2 88.3,57.2 88.6,60.4 88.8,60.3 89.1,59.0 89.4,57.5 89.6,56.6 89.9,57.4 90.2,60.2 90.5,58.6 90.7,57.6 91.0,56.3 91.3,58.2 91.5,56.7 91.8,58.0 92.1,59.0 92.3,59.4 92.6,58.2 92.9,57.5 93.1,58.3 93.4,60.4 93.7,58.5 94.0,56.1 94.2,60.1 94.5,58.3 94.8,60.6 95.0,57.3 95.3,57.9 95.6,57.6 95.8,58.5 96.1,57.2 96.4,56.0 96.6,55.4 96.9,57.8 97.2,57.3 97.4,57.2 97.7,60.6 98.0,59.1 98.3,59.5 98.5,57.3 98.8,58.4 99.1,57.7 99.3,57.7 99.6,59.0 99.9,58.8 100.1,58.4 100.4,58.2 100.7,56.0 100.9,57.0 101.2,58.6 101.5,57.5 101.8,57.0 102.0,58.5 102.3,56.8 102.6,57.1 102.8,59.3 103.1,57.5 103.4,60.0 103.6,58.8 103.9,59.2 104.2,59.6 104.4,55.5 104.7,57.9 105.0,56.3 105.3,57.4 105.5,57.9 105.8,59.8 106.1,58.0 106.3,60.3 106.6,57.3 106.9,58.0 107.1,58.2 107.4,59.4 107.7,58.0 107.9,57.2 108.2,57.6 108.5,56.2 108.7,59.8 109.0,59.1 109.3,58.7 109.6,58.5 109.8,57.3 110.1,57.5 110.4,59.2 110.6,57.0 110.9,57.0 111.2,60.3 111.4,60.2 111.7,58.5 112.0,58.8 112.2,58.4 112.5,60.1 112.8,57.5 113.1,58.2 113.3,58.8 113.6,60.1 113.9,57.8 114.1,58.4 114.4,57.5 114.7,57.2 114.9,57.2 115.2,58.2 115.5,59.3 115.7,57.2 116.0,57.3 116.3,57.6 116.6,58.6 116.8,59.1 117.1,56.4 117.4,58.6 117.6,56.8 117.9,59.1 118.2,56.8 118.4,56.7 118.7,57.2 119.0,58.1 119.2,56.8 119.5,58.5 119.8,58.4 120.0,58.3 120.3,58.5 120.6,59.4 120.9,57.2 121.1,58.2 121.4,58.1 121.7,55.6 121.9,58.7 122.2,57.1 122.5,57.2 122.7,57.6 123.0,58.3 123.3,58.6 123.5,58.8 123.8,57.3 124.1,59.1 124.4,58.8 124.6,57.7 124.9,58.2 125.2,59.3 125.4,58.8 125.7,59.2 126.0,58.4 126.2,59.8 126.5,60.8 126.8,58.8 127.0,56.1 127.3,60.6 127.6,57.5 127.9,56.4 128.1,55.6 128.4,58.8 128.7,59.7 128.9,59.6 129.2,57.7 129.5,60.2 129.7,58.1 130.0,57.4 130.3,58.3 130.5,58.5 130.8,58.3 131.1,58.8 131.3,55.6 131.6,60.4 131.9,57.5 132.2,59.1 132.4,57.2 132.7,58.5 133.0,58.0 133.2,56.1 133.5,58.8 133.8,59.1 134.0,56.8 134.3,55.7 134.6,57.4 134.8,57.1 135.1,58.4 135.4,58.3 135.7,60.5 135.9,59.2 136.2,57.9 136.5,58.5 136.7,55.7 137.0,57.1 137.3,57.0 137.5,58.1 137.8,58.7 138.1,58.6 138.3,59.6 138.6,57.4 138.9,58.7 139.2,58.1 139.4,58.3 139.7,58.7 140.0,57.9 140.2,58.6 140.5,58.3 140.8,59.7 141.0,58.2 141.3,58.7 141.6,60.9 141.8,59.2 142.1,59.0 142.4,59.8 142.7,57.0 142.9,59.3 143.2,59.3 143.5,58.9 143.7,59.7 144.0,59.4 144.3,59.9 144.5,57.5 144.8,58.9 145.1,57.6 145.3,60.0 145.6,58.5 145.9,56.6 146.1,58.5 146.4,57.0 146.7,59.7 147.0,57.9 147.2,55.8 147.5,57.8 147.8,59.7 148.0,58.8 148.3,57.5 148.6,59.2 148.8,59.2 149.1,60.4 149.4,59.6 149.6,58.9 149.9,57.3 150.2,58.8 150.5,58.8 150.7,58.4 151.0,59.0 151.3,56.8 151.5,59.2 151.8,58.4 152.1,58.9 152.3,58.3 152.6,58.0 152.9,58.8 153.1,59.5 153.4,58.0 153.7,58.9 154.0,57.4 154.2,59.0 154.5,58.4 154.8,56.7 155.0,60.0 155.3,57.2 155.6,58.5 155.8,56.7 156.1,56.1 156.4,59.3 156.6,56.6 156.9,55.8 157.2,58.2 157.4,56.4 157.7,58.2 158.0,60.9 158.3,57.9 158.5,58.9 158.8,59.2 159.1,58.8 159.3,58.3 159.6,60.5 159.9,58.4 160.1,58.9 160.4,58.6 160.7,56.7 160.9,58.9 161.2,58.5 161.5,59.3 161.8,59.4 162.0,60.6 162.3,55.9 162.6,57.7 162.8,57.8 163.1,57.3 163.4,59.0 163.6,58.4 163.9,58.7 164.2,56.3 164.4,57.2 164.7,58.4 165.0,57.9 165.3,57.7 165.5,58.3 165.8,58.1 166.1,57.1 166.3,60.7 166.6,57.6 166.9,59.4 167.1,59.3 167.4,59.8 167.7,57.8 167.9,57.2 168.2,59.1 168.5,58.9 168.7,55.9 169.0,55.9 169.3,57.8 169.6,58.0 169.8,58.2 170.1,59.1 170.4,57.2 170.6,61.1 170.9,59.7 171.2,60.3 171.4,58.9 171.7,55.9 172.0,58.9 172.2,57.8 172.5,59.1 172.8,58.4 173.1,59.4 173.3,57.4 173.6,58.1 173.9,58.6 174.1,57.6 174.4,58.0 174.7,59.4 174.9,61.1 175.2,58.3 175.5,59.7 175.7,57.1 176.0,58.0 176.3,59.0 176.6,59.4 176.8,57.2 177.1,59.4 177.4,58.8 177.6,60.3 177.9,59.8 178.2,59.3 178.4,58.1 178.7,58.9 179.0,57.5 179.2,57.5 179.5,56.1 179.8,56.9 180.1,56.9 180.3,58.5 180.6,58.7 180.9,56.8 181.1,58.5 181.4,59.2 181.7,59.8 181.9,58.5 182.2,58.9 182.5,58.1 182.7,59.9 183.0,56.5 183.3,58.9 183.5,56.0 183.8,60.9 184.1,59.9 184.4,56.0 184.6,57.9 184.9,56.8 185.2,56.3 185.4,58.1 185.7,57.5 186.0,60.0 186.2,58.0 186.5,57.2 186.8,58.5 187.0,59.2 187.3,59.7 187.6,59.3 187.9,56.7 188.1,57.6 188.4,58.4 188.7,57.5 188.9,59.6 189.2,58.2 189.5,58.6 189.7,58.2 190.0,58.7 190.3,56.7 190.5,61.3 190.8,57.9 191.1,57.7 191.4,56.3 191.6,58.6 191.9,56.8 192.2,59.1 192.4,60.3 192.7,59.5 193.0,58.1 193.2,60.4 193.5,58.4 193.8,58.6 194.0,58.8 194.3,58.1 194.6,59.3 194.8,57.1 195.1,56.3 195.4,60.3 195.7,57.7 195.9,58.2 196.2,59.2 196.5,58.1 196.7,57.1 197.0,58.4 197.3,57.5 197.5,59.4 197.8,58.1 198.1,58.4 198.3,59.7 198.6,56.7 198.9,56.7 199.2,59.7 199.4,60.4 199.7,58.9 200.0,57.8 200.2,60.4 200.5,59.4 200.8,60.1 201.0,56.3 201.3,58.6 201.6,57.4 201.8,57.3 202.1,59.5 202.4,59.7 202.7,58.1 202.9,58.4 203.2,60.6 203.5,59.6 203.7,58.6 204.0,59.4 204.3,58.9 204.5,57.1 204.8,58.1 205.1,59.1 205.3,59.6 205.6,57.2 205.9,57.7 206.1,58.0 206.4,56.8 206.7,60.2 207.0,59.4 207.2,60.5 207.5,56.2 207.8,57.7 208.0,61.2 208.3,56.9 208.6,56.4 208.8,59.1 209.1,60.9 209.4,59.7 209.6,57.5 209.9,59.5 210.2,59.4 210.5,59.2 210.7,59.3 211.0,59.9 211.3,60.4 211.5,60.6 211.8,60.2 212.1,58.6 212.3,56.4 212.6,59.6 212.9,56.8 213.1,61.5 213.4,57.3 213.7,56.4 214.0,56.4 214.2,59.4 214.5,59.2 214.8,59.7 215.0,59.2 215.3,57.8 215.6,59.9 215.8,57.9 216.1,56.9 216.4,60.1 216.6,59.6 216.9,57.6 217.2,58.5 217.5,60.2 217.7,60.1 218.0,57.4 218.3,60.3 218.5,56.3 218.8,59.0 219.1,59.4 219.3,58.7 219.6,59.0 219.9,56.7 220.1,58.7 220.4,59.6 220.7,57.7 220.9,59.1 221.2,58.7 221.5,56.3 221.8,58.1 222.0,59.7 222.3,56.8 222.6,58.9 222.8,59.4 223.1,57.2 223.4,58.6 223.6,60.1 223.9,59.9 224.2,57.6 224.4,60.3 224.7,59.4 225.0,59.1 225.3,60.9 225.5,59.9 225.8,59.4 226.1,60.2 226.3,59.8 226.6,60.6 226.9,58.8 227.1,56.6 227.4,61.0 227.7,60.0 227.9,59.7 228.2,59.0 228.5,58.8 228.8,59.1 229.0,57.7 229.3,60.0 229.6,59.1 229.8,57.7 230.1,59.3 230.4,58.5 230.6,58.9 230.9,59.7 231.2,61.6 231.4,57.6 231.7,59.5 232.0,59.9 232.2,59.6 232.5,61.0 232.8,58.4 233.1,58.6 233.3,59.0 233.6,57.2 233.9,60.5 234.1,57.3 234.4,59.7 234.7,60.6 234.9,57.9 235.2,58.8 235.5,58.7 235.7,61.3 236.0,59.4 236.3,56.7 236.6,60.4 236.8,60.4 237.1,56.4 237.4,56.4 237.6,61.6 237.9,59.1 238.2,56.4 238.4,60.4 238.7,60.9 239.0,56.4 239.2,60.7 239.5,60.0 239.8,59.0 240.1,58.1 240.3,59.6 240.6,58.0 240.9,59.3 241.1,58.7 241.4,58.5 241.7,59.8 241.9,60.4 242.2,60.2 242.5,59.7 242.7,61.3 243.0,57.4 243.3,59.2 243.5,59.3 243.8,60.7 244.1,56.5 244.4,58.5 244.6,58.7 244.9,59.3 245.2,61.7 245.4,59.4 245.7,59.0 246.0,59.7 246.2,60.4 246.5,58.9 246.8,61.3 247.0,57.5 247.3,60.8 247.6,60.0 247.9,60.4 248.1,61.2 248.4,58.8 248.7,59.7 248.9,59.5 249.2,58.3 249.5,58.1 249.7,58.1 250.0,60.3 250.3,56.5 250.5,57.4 250.8,59.2 251.1,60.9 251.4,59.0 251.6,60.8 251.9,59.1 252.2,58.4 252.4,57.0 252.7,59.4 253.0,61.5 253.2,59.3 253.5,57.8 253.8,59.9 254.0,57.3 254.3,57.6 254.6,60.6 254.8,59.7 255.1,60.5 255.4,59.5 255.7,59.0 255.9,59.4 256.2,58.7 256.5,60.6 256.7,57.4 257.0,56.6 257.3,58.0 257.5,60.4 257.8,58.5 258.1,56.6 258.3,61.8 258.6,57.9 258.9,58.9 259.2,60.0 259.4,59.7 259.7,59.0 260.0,57.1 260.2,59.9 260.5,57.9 261.3,58.5 262.1,-67.0 262.9,-67.0 263.9,58.5 264.6,58.8 264.9,59.9 265.1,58.6 265.4,56.9 265.6,58.3 265.9,59.8 266.2,59.9 266.4,57.5 266.7,59.1 267.0,59.4 267.2,60.3 267.5,59.6 267.7,59.3 268.0,58.7 268.3,59.7 268.5,60.0 268.8,58.9 269.0,58.8 269.3,61.2 269.6,59.1 269.8,58.2 270.1,60.0 270.4,57.7 270.6,57.9 270.9,60.3 271.1,59.2 271.4,60.1"/>
</svg>
<rect x="911.00" y="517.00" width="274.00" height="119.70" fill="none" stroke="#000" stroke-width="1.7"/>
<line x1="904.10" y1="531.90" x2="911.00" y2="531.90" stroke="#000" stroke-width="1.7"/>
<text x="871.15" y="536.24" font-size="10.30" textLength="24.28" lengthAdjust="spacingAndGlyphs">1100</text>
<line x1="904.10" y1="561.80" x2="911.00" y2="561.80" stroke="#000" stroke-width="1.7"/>
<text x="871.15" y="566.14" font-size="10.30" textLength="24.28" lengthAdjust="spacingAndGlyphs">1000</text>
<line x1="904.10" y1="591.30" x2="911.00" y2="591.30" stroke="#000" stroke-width="1.7"/>
<text x="877.19" y="595.64" font-size="10.30" textLength="18.23" lengthAdjust="spacingAndGlyphs">900</text>
<line x1="904.10" y1="621.00" x2="911.00" y2="621.00" stroke="#000" stroke-width="1.7"/>
<text x="877.28" y="625.34" font-size="10.30" textLength="18.14" lengthAdjust="spacingAndGlyphs">800</text>
<line x1="913.20" y1="636.70" x2="913.20" y2="643.60" stroke="#000" stroke-width="1.7"/>
<text x="911.05" y="659.90" font-size="10.30" textLength="5.70" lengthAdjust="spacingAndGlyphs">0</text>
<line x1="966.90" y1="636.70" x2="966.90" y2="643.60" stroke="#000" stroke-width="1.7"/>
<text x="958.45" y="659.90" font-size="10.30" textLength="18.17" lengthAdjust="spacingAndGlyphs">200</text>
<line x1="1020.90" y1="636.70" x2="1020.90" y2="643.60" stroke="#000" stroke-width="1.7"/>
<text x="1012.63" y="659.90" font-size="10.30" textLength="18.11" lengthAdjust="spacingAndGlyphs">400</text>
<line x1="1074.90" y1="636.70" x2="1074.90" y2="643.60" stroke="#000" stroke-width="1.7"/>
<text x="1066.43" y="659.90" font-size="10.30" textLength="18.21" lengthAdjust="spacingAndGlyphs">600</text>
<line x1="1127.90" y1="636.70" x2="1127.90" y2="643.60" stroke="#000" stroke-width="1.7"/>
<text x="1119.50" y="659.90" font-size="10.30" textLength="18.14" lengthAdjust="spacingAndGlyphs">800</text>
<line x1="1181.60" y1="636.70" x2="1181.60" y2="643.60" stroke="#000" stroke-width="1.7"/>
<text x="1169.96" y="659.90" font-size="10.30" textLength="24.28" lengthAdjust="spacingAndGlyphs">1000</text>
<text x="1044.25" y="678.00" font-size="10.30" textLength="6.49" lengthAdjust="spacingAndGlyphs">X</text>
<g transform="translate(860.20,577.50) rotate(-90)"><text x="-17.37" y="0.00" font-size="11.04" textLength="34.67" lengthAdjust="spacingAndGlyphs">counts</text></g>
<g transform="translate(1193.50,575.00) rotate(90)"><text x="-19.41" y="0.00" font-size="11.04" textLength="38.44" lengthAdjust="spacingAndGlyphs">cut in x</text></g>
<rect x="1115.8" y="520" width="66" height="16.3" rx="2" fill="#fff" fill-opacity="0.8" stroke="#cccccc" stroke-width="1"/>
<line x1="1118.30" y1="528.00" x2="1140.80" y2="528.00" stroke="#0000ff" stroke-width="1.39"/>
<text x="1144.27" y="531.10" font-size="10.30" textLength="32.00" lengthAdjust="spacingAndGlyphs">y=500</text>
<svg x="911" y="688.9" width="274" height="119.6" overflow="hidden">
<polyline fill="none" stroke="#0000ff" stroke-width="1.75" points="2.2,60.1 2.5,58.1 2.7,59.8 3.0,58.6 3.3,59.4 3.5,59.4 3.8,59.0 4.1,57.4 4.3,59.5 4.6,59.1 4.9,59.8 5.2,57.7 5.4,59.4 5.7,58.8 6.0,58.5 6.2,58.7 6.5,58.8 6.8,57.3 7.0,58.4 7.3,58.5 7.6,59.7 7.8,58.9 8.1,61.0 8.4,59.9 8.6,59.5 8.9,59.4 9.2,57.2 9.4,59.6 9.7,60.8 10.0,57.7 10.3,60.9 10.5,59.9 10.8,59.5 11.1,58.5 11.3,59.1 11.6,58.1 11.9,59.1 12.1,59.2 12.4,59.2 12.7,57.5 12.9,60.3 13.2,58.2 13.5,59.6 13.7,59.9 14.0,58.8 14.3,61.7 14.5,59.3 14.8,59.7 15.1,58.8 15.4,59.5 15.6,57.4 15.9,60.0 16.2,58.6 16.4,58.4 16.7,60.1 17.0,60.3 17.2,58.5 17.5,57.7 17.8,56.5 18.0,57.8 18.3,59.8 18.6,59.9 18.8,57.4 19.1,59.2 19.4,60.5 19.6,58.1 19.9,58.4 20.2,57.9 20.5,59.6 20.7,56.6 21.0,58.9 21.3,59.7 21.5,59.0 21.8,60.4 22.1,59.9 22.3,58.4 22.6,57.8 22.9,57.7 23.1,59.7 23.4,58.9 23.7,59.3 23.9,57.9 24.2,60.6 24.5,60.3 24.7,60.1 25.0,57.6 25.3,61.7 25.6,60.2 25.8,57.7 26.1,60.4 26.4,58.9 26.6,58.1 26.9,58.1 27.2,59.8 27.4,59.5 27.7,59.4 28.0,58.8 28.2,57.7 28.5,59.4 28.8,58.7 29.0,58.8 29.3,59.9 29.6,61.3 29.8,58.3 30.1,60.4 30.4,58.1 30.7,60.2 30.9,60.0 31.2,59.1 31.5,59.4 31.7,58.1 32.0,58.7 32.3,60.4 32.5,60.1 32.8,61.7 33.1,57.8 33.3,58.5 33.6,59.2 33.9,59.2 34.1,58.4 34.4,58.6 34.7,59.0 34.9,60.8 35.2,59.0 35.5,58.1 35.8,59.5 36.0,56.5 36.3,58.0 36.6,58.3 36.8,59.5 37.1,56.5 37.4,58.8 37.6,57.7 37.9,60.4 38.2,60.1 38.4,58.5 38.7,59.7 39.0,57.6 39.2,59.4 39.5,59.4 39.8,60.5 40.0,58.5 40.3,56.5 40.6,60.2 40.8,57.7 41.1,58.4 41.4,58.6 41.7,61.3 41.9,59.0 42.2,60.6 42.5,59.2 42.7,57.3 43.0,59.7 43.3,59.8 43.5,58.4 43.8,57.0 44.1,61.7 44.3,61.7 44.6,59.6 44.9,59.7 45.1,60.3 45.4,59.9 45.7,57.2 45.9,57.3 46.2,60.2 46.5,60.9 46.8,60.5 47.0,60.2 47.3,59.1 47.6,60.4 47.8,61.1 48.1,59.8 48.4,60.7 48.6,60.7 48.9,58.2 49.2,60.6 49.4,58.1 49.7,57.9 50.0,61.2 50.2,56.9 50.5,58.9 50.8,60.3 51.0,59.6 51.3,58.6 51.6,57.9 51.9,59.8 52.1,59.8 52.4,59.0 52.7,57.8 52.9,57.2 53.2,59.1 53.5,59.0 53.7,60.2 54.0,58.7 54.3,60.3 54.5,57.5 54.8,56.8 55.1,60.3 55.3,58.5 55.6,58.0 55.9,58.9 56.1,57.5 56.4,58.7 56.7,57.3 57.0,59.3 57.2,58.3 57.5,59.0 57.8,59.1 58.0,59.7 58.3,56.9 58.6,59.3 58.8,58.8 59.1,57.6 59.4,58.8 59.6,59.8 59.9,59.7 60.2,61.7 60.4,58.7 60.7,59.3 61.0,61.6 61.2,58.3 61.5,58.0 61.8,58.5 62.1,58.3 62.3,59.1 62.6,59.3 62.9,58.1 63.1,57.6 63.4,59.0 63.7,57.5 63.9,58.0 64.2,59.6 64.5,59.0 64.7,57.8 65.0,57.2 65.3,57.8 65.5,57.2 65.8,59.8 66.1,60.1 66.3,59.5 66.6,59.5 66.9,58.5 67.2,59.3 67.4,59.2 67.7,59.2 68.0,58.5 68.2,57.7 68.5,59.5 68.8,59.6 69.0,57.6 69.3,58.8 69.6,59.1 69.8,59.7 70.1,56.9 70.4,57.3 70.6,57.3 70.9,57.5 71.2,57.7 71.4,60.2 71.7,57.6 72.0,61.7 72.3,59.5 72.5,60.0 72.8,59.0 73.1,60.2 73.3,59.6 73.6,60.1 73.9,59.9 74.1,59.9 74.4,59.6 74.7,60.5 74.9,59.1 75.2,58.4 75.5,61.2 75.7,58.5 76.0,59.6 76.3,61.7 76.5,58.3 76.8,58.7 77.1,58.2 77.4,57.9 77.6,59.9 77.9,58.8 78.2,59.3 78.4,56.9 78.7,59.7 79.0,58.2 79.2,56.6 79.5,58.2 79.8,57.0 80.0,61.2 80.3,56.9 80.6,59.5 80.8,57.8 81.1,58.0 81.4,57.4 81.6,60.7 81.9,57.7 82.2,58.3 82.5,59.4 82.7,58.6 83.0,60.0 83.3,58.1 83.5,57.0 83.8,59.7 84.1,60.7 84.3,59.8 84.6,58.0 84.9,60.6 85.1,60.1 85.4,58.6 85.7,59.7 85.9,59.1 86.2,59.3 86.5,59.9 86.7,60.2 87.0,59.2 87.3,59.2 87.6,56.5 87.8,58.1 88.1,59.7 88.4,58.1 88.6,59.6 88.9,58.8 89.2,59.2 89.4,59.2 89.7,60.8 90.0,59.8 90.2,59.2 90.5,57.6 90.8,59.6 91.0,57.7 91.3,60.7 91.6,58.2 91.8,58.3 92.1,58.9 92.4,57.8 92.7,59.7 92.9,59.5 93.2,58.2 93.5,58.4 93.7,61.5 94.0,60.6 94.3,59.8 94.5,59.5 94.8,61.1 95.1,58.6 95.3,58.8 95.6,58.9 95.9,57.7 96.1,58.0 96.4,61.5 96.7,59.3 96.9,58.0 97.2,58.8 97.5,58.5 97.8,58.5 98.0,59.0 98.3,57.2 98.6,56.8 98.8,58.8 99.1,58.8 99.4,57.6 99.6,59.0 99.9,58.4 100.2,59.4 100.4,58.8 100.7,60.6 101.0,60.9 101.2,60.0 101.5,59.1 101.8,60.2 102.0,60.1 102.3,59.7 102.6,60.1 102.9,58.6 103.1,60.1 103.4,59.8 103.7,59.6 103.9,58.9 104.2,58.6 104.5,59.9 104.7,58.5 105.0,57.7 105.3,61.3 105.5,60.7 105.8,58.1 106.1,60.9 106.3,56.5 106.6,59.9 106.9,60.0 107.1,59.4 107.4,58.9 107.7,60.1 107.9,59.8 108.2,57.7 108.5,58.2 108.8,60.4 109.0,60.1 109.3,57.7 109.6,57.2 109.8,59.7 110.1,58.1 110.4,58.2 110.6,58.5 110.9,59.4 111.2,56.5 111.4,60.1 111.7,58.7 112.0,60.3 112.2,57.7 112.5,58.0 112.8,59.8 113.0,60.4 113.3,59.1 113.6,58.7 113.9,60.9 114.1,60.5 114.4,59.5 114.7,58.8 114.9,60.8 115.2,60.0 115.5,58.7 115.7,61.0 116.0,60.6 116.3,59.4 116.5,59.7 116.8,60.1 117.1,58.5 117.3,57.6 117.6,60.7 117.9,57.0 118.1,57.2 118.4,57.3 118.7,59.8 119.0,60.5 119.2,58.3 119.5,60.8 119.8,61.2 120.0,60.9 120.3,57.5 120.6,60.8 120.8,61.7 121.1,58.0 121.4,57.0 121.6,60.8 121.9,59.8 122.2,59.1 122.4,59.1 122.7,56.9 123.0,58.0 123.2,59.4 123.5,59.7 123.8,60.3 124.1,60.3 124.3,58.5 124.6,59.0 124.9,61.0 125.1,57.4 125.4,59.8 125.7,58.0 125.9,59.4 126.2,61.5 126.5,59.7 126.7,58.6 127.0,58.3 127.3,57.3 127.5,59.1 127.8,56.5 128.1,59.0 128.3,59.3 128.6,58.0 128.9,58.1 129.2,60.7 129.4,60.7 129.7,61.7 130.0,60.6 130.2,59.5 130.5,58.9 130.8,60.7 131.0,60.0 131.3,59.4 131.6,61.5 131.8,58.9 132.1,59.4 132.4,60.6 132.6,59.8 132.9,59.2 133.2,60.5 133.4,61.7 133.7,58.7 134.0,60.0 134.3,59.7 134.5,59.4 134.8,61.3 135.1,59.0 135.3,61.4 135.6,57.9 135.9,59.3 136.1,58.1 136.4,59.6 136.7,60.0 136.9,59.9 137.2,59.4 137.5,58.8 137.7,57.6 138.0,60.2 138.3,59.2 138.5,60.6 138.8,57.0 139.1,58.8 139.4,56.9 139.6,60.6 139.9,58.2 140.2,57.8 140.4,60.3 140.7,59.0 141.0,59.5 141.2,59.0 141.5,60.6 141.8,59.5 142.0,59.5 142.3,59.1 142.6,60.4 142.8,60.6 143.1,58.7 143.4,60.3 143.6,57.2 143.9,58.1 144.2,58.4 144.5,58.2 144.7,59.8 145.0,57.3 145.3,57.1 145.5,59.4 145.8,58.0 146.1,59.2 146.3,59.2 146.6,58.3 146.9,58.6 147.1,60.2 147.4,59.1 147.7,59.2 147.9,60.0 148.2,58.2 148.5,57.6 148.7,58.7 149.0,61.2 149.3,59.9 149.6,61.7 149.8,60.4 150.1,60.3 150.4,58.5 150.6,57.0 150.9,56.5 151.2,59.3 151.4,57.7 151.7,57.6 152.0,59.9 152.2,59.5 152.5,57.4 152.8,59.5 153.0,60.9 153.3,60.4 153.6,58.2 153.8,60.4 154.1,56.5 154.4,58.7 154.7,58.5 154.9,60.7 155.2,57.5 155.5,57.9 155.7,58.7 156.0,60.1 156.3,57.3 156.5,59.4 156.8,58.7 157.1,58.5 157.3,57.5 157.6,59.7 157.9,59.3 158.1,59.7 158.4,59.3 158.7,59.0 158.9,58.0 159.2,59.1 159.5,60.2 159.8,59.3 160.0,59.8 160.3,60.3 160.6,59.6 160.8,58.8 161.1,57.9 161.4,60.8 161.6,58.9 161.9,58.9 162.2,59.2 162.4,60.2 162.7,60.3 163.0,58.2 163.2,59.0 163.5,60.6 163.8,58.3 164.0,59.2 164.3,58.0 164.6,57.2 164.9,57.4 165.1,59.3 165.4,59.5 165.7,56.5 165.9,58.8 166.2,58.8 166.5,57.1 166.7,59.0 167.0,58.1 167.3,60.9 167.5,57.8 167.8,60.5 168.1,57.6 168.3,57.8 168.6,61.0 168.9,58.1 169.1,58.6 169.4,57.1 169.7,59.3 170.0,60.9 170.2,58.8 170.5,58.8 170.8,59.1 171.0,58.1 171.3,57.5 171.6,59.2 171.8,58.7 172.1,56.8 172.4,56.5 172.6,59.7 172.9,57.5 173.2,59.7 173.4,60.3 173.7,59.0 174.0,58.3 174.2,56.5 174.5,61.1 174.8,60.3 175.0,58.1 175.3,57.7 175.6,59.8 175.9,56.5 176.1,60.0 176.4,60.3 176.7,57.5 176.9,57.7 177.2,61.5 177.5,58.5 177.7,59.3 178.0,58.7 178.3,56.5 178.5,60.4 178.8,61.2 179.1,58.3 179.3,57.9 179.6,61.1 179.9,57.1 180.1,58.7 180.4,57.3 180.7,57.0 181.0,58.3 181.2,56.5 181.5,57.5 181.8,59.2 182.0,58.1 182.3,57.7 182.6,61.7 182.8,60.1 183.1,58.4 183.4,60.5 183.6,59.9 183.9,59.3 184.2,60.1 184.4,58.6 184.7,58.4 185.0,61.5 185.2,59.2 185.5,61.1 185.8,56.5 186.1,57.9 186.3,57.9 186.6,59.3 186.9,59.0 187.1,60.4 187.4,59.8 187.7,59.1 187.9,59.8 188.2,60.0 188.5,59.5 188.7,56.5 189.0,58.5 189.3,59.9 189.5,58.6 189.8,60.9 190.1,58.4 190.3,59.2 190.6,58.0 190.9,58.9 191.2,60.6 191.4,61.0 191.7,60.2 192.0,60.0 192.2,59.3 192.5,57.4 192.8,59.9 193.0,58.3 193.3,59.5 193.6,59.0 193.8,60.2 194.1,58.2 194.4,60.1 194.6,59.1 194.9,61.2 195.2,58.9 195.4,58.9 195.7,56.6 196.0,60.3 196.3,59.1 196.5,56.5 196.8,59.7 197.1,59.7 197.3,58.7 197.6,60.8 197.9,59.0 198.1,58.9 198.4,59.6 198.7,57.6 198.9,59.8 199.2,58.0 199.5,59.4 199.7,60.6 200.0,58.6 200.3,58.3 200.5,61.3 200.8,59.2 201.1,60.5 201.4,59.9 201.6,59.7 201.9,61.0 202.2,59.1 202.4,57.1 202.7,58.8 203.0,58.3 203.2,57.7 203.5,58.6 203.8,59.7 204.0,59.8 204.3,59.2 204.6,58.9 204.8,59.2 205.1,58.5 205.4,58.0 205.6,59.2 205.9,60.3 206.2,58.2 206.5,59.1 206.7,60.0 207.0,57.9 207.3,59.6 207.5,59.3 207.8,60.5 208.1,58.0 208.3,58.6 208.6,61.2 208.9,61.7 209.1,59.9 209.4,60.9 209.7,58.3 209.9,60.5 210.2,59.5 210.5,60.0 210.7,57.6 211.0,59.4 211.3,60.1 211.6,60.6 211.8,59.7 212.1,59.7 212.4,60.4 212.6,61.4 212.9,57.3 213.2,56.7 213.4,59.2 213.7,61.3 214.0,61.5 214.2,60.1 214.5,57.9 214.8,60.0 215.0,58.4 215.3,60.3 215.6,59.0 215.8,61.4 216.1,57.9 216.4,61.1 216.7,58.2 216.9,60.1 217.2,59.6 217.5,57.5 217.7,56.7 218.0,58.9 218.3,58.8 218.5,58.4 218.8,60.1 219.1,59.6 219.3,59.9 219.6,57.8 219.9,59.0 220.1,59.0 220.4,60.5 220.7,60.8 220.9,58.5 221.2,59.1 221.5,56.5 221.8,61.7 222.0,59.6 222.3,59.8 222.6,59.6 222.8,58.9 223.1,56.8 223.4,57.9 223.6,58.1 223.9,58.9 224.2,57.7 224.4,59.4 224.7,60.0 225.0,59.4 225.2,59.3 225.5,61.7 225.8,58.1 226.0,58.3 226.3,60.2 226.6,58.7 226.9,61.4 227.1,58.3 227.4,59.1 227.7,61.4 227.9,57.0 228.2,60.5 228.5,59.5 228.7,59.4 229.0,61.0 229.3,58.4 229.5,60.0 229.8,58.5 230.1,60.8 230.3,57.5 230.6,59.1 230.9,58.5 231.1,57.7 231.4,60.5 231.7,58.6 232.0,59.9 232.2,56.5 232.5,57.8 232.8,57.9 233.0,59.6 233.3,57.0 233.6,59.6 233.8,60.4 234.1,59.3 234.4,59.3 234.6,58.6 234.9,58.0 235.2,59.1 235.4,59.4 235.7,61.1 236.0,59.4 236.2,58.2 236.5,60.2 236.8,57.8 237.0,56.5 237.3,58.8 237.6,58.2 237.9,60.0 238.1,59.0 238.4,57.4 238.7,58.2 238.9,58.4 239.2,61.7 239.5,57.5 239.7,57.7 240.0,60.7 240.3,61.1 240.5,58.7 240.8,60.9 241.1,59.0 241.3,57.9 241.6,59.0 241.9,60.3 242.1,61.1 242.4,58.8 242.7,57.4 243.0,59.4 243.2,58.5 243.5,58.2 243.8,59.7 244.0,59.4 244.3,57.5 244.6,58.2 244.8,61.0 245.1,58.8 245.4,61.5 245.6,56.5 245.9,57.7 246.2,59.1 246.4,57.8 246.7,59.3 247.0,59.2 247.2,57.3 247.5,61.5 247.8,61.4 248.1,56.9 248.3,58.7 248.6,57.4 248.9,58.6 249.1,58.5 249.4,58.8 249.7,60.6 249.9,60.7 250.2,58.7 250.5,59.7 250.7,60.0 251.0,57.0 251.3,59.2 251.5,57.8 251.8,60.6 252.1,60.8 252.3,59.5 252.6,61.1 252.9,58.7 253.2,58.1 253.4,60.9 253.7,59.1 254.0,59.6 254.2,57.4 254.5,60.1 254.8,59.0 255.0,58.9 255.3,57.7 255.6,58.1 255.8,58.5 256.1,59.3 256.4,60.8 256.6,56.8 256.9,57.3 257.2,57.8 257.4,58.1 257.7,58.0 258.0,57.6 258.3,58.2 258.5,59.7 258.8,58.5 259.1,57.9 259.3,59.9 259.6,59.3 259.9,57.8 260.1,60.7 260.4,58.2 260.7,57.8 260.9,59.6 261.2,58.0 261.5,57.8 261.7,60.9 262.0,58.5 262.3,57.8 262.5,59.3 262.8,58.9 263.1,56.5 263.4,58.5 263.6,59.7 263.9,58.5 264.2,59.7 264.4,57.5 264.7,60.2 265.0,58.6 265.2,58.1 265.5,57.4 265.8,60.3 266.0,59.0 266.3,58.6 266.6,59.5 266.8,58.9 267.1,58.6 267.4,59.5 267.6,58.5 267.9,60.3 268.2,61.7 268.5,56.8 268.7,59.1 269.0,58.5 269.3,59.9 269.5,56.5 269.8,61.7 270.1,60.1 270.3,61.7 270.6,60.6"/>
</svg>
<rect x="911.00" y="688.90" width="274.00" height="119.60" fill="none" stroke="#000" stroke-width="1.7"/>
<line x1="904.10" y1="703.80" x2="911.00" y2="703.80" stroke="#000" stroke-width="1.7"/>
<text x="871.15" y="708.14" font-size="10.30" textLength="24.28" lengthAdjust="spacingAndGlyphs">1100</text>
<line x1="904.10" y1="733.80" x2="911.00" y2="733.80" stroke="#000" stroke-width="1.7"/>
<text x="871.15" y="738.14" font-size="10.30" textLength="24.28" lengthAdjust="spacingAndGlyphs">1000</text>
<line x1="904.10" y1="763.50" x2="911.00" y2="763.50" stroke="#000" stroke-width="1.7"/>
<text x="877.19" y="767.84" font-size="10.30" textLength="18.23" lengthAdjust="spacingAndGlyphs">900</text>
<line x1="904.10" y1="793.20" x2="911.00" y2="793.20" stroke="#000" stroke-width="1.7"/>
<text x="877.28" y="797.54" font-size="10.30" textLength="18.14" lengthAdjust="spacingAndGlyphs">800</text>
<line x1="913.20" y1="808.50" x2="913.20" y2="815.40" stroke="#000" stroke-width="1.7"/>
<text x="911.05" y="831.70" font-size="10.30" textLength="5.70" lengthAdjust="spacingAndGlyphs">0</text>
<line x1="966.90" y1="808.50" x2="966.90" y2="815.40" stroke="#000" stroke-width="1.7"/>
<text x="958.45" y="831.70" font-size="10.30" textLength="18.17" lengthAdjust="spacingAndGlyphs">200</text>
<line x1="1020.90" y1="808.50" x2="1020.90" y2="815.40" stroke="#000" stroke-width="1.7"/>
<text x="1012.63" y="831.70" font-size="10.30" textLength="18.11" lengthAdjust="spacingAndGlyphs">400</text>
<line x1="1074.90" y1="808.50" x2="1074.90" y2="815.40" stroke="#000" stroke-width="1.7"/>
<text x="1066.43" y="831.70" font-size="10.30" textLength="18.21" lengthAdjust="spacingAndGlyphs">600</text>
<line x1="1127.90" y1="808.50" x2="1127.90" y2="815.40" stroke="#000" stroke-width="1.7"/>
<text x="1119.50" y="831.70" font-size="10.30" textLength="18.14" lengthAdjust="spacingAndGlyphs">800</text>
<line x1="1181.60" y1="808.50" x2="1181.60" y2="815.40" stroke="#000" stroke-width="1.7"/>
<text x="1169.96" y="831.70" font-size="10.30" textLength="24.28" lengthAdjust="spacingAndGlyphs">1000</text>
<text x="1044.30" y="850.00" font-size="10.30" textLength="6.40" lengthAdjust="spacingAndGlyphs">Y</text>
<g transform="translate(860.20,750.50) rotate(-90)"><text x="-17.37" y="0.00" font-size="11.04" textLength="34.67" lengthAdjust="spacingAndGlyphs">counts</text></g>
<g transform="translate(1193.50,749.00) rotate(90)"><text x="-19.43" y="0.00" font-size="11.04" textLength="38.36" lengthAdjust="spacingAndGlyphs">cut in y</text></g>
<rect x="1115.8" y="692" width="66" height="16.3" rx="2" fill="#fff" fill-opacity="0.8" stroke="#cccccc" stroke-width="1"/>
<line x1="1118.30" y1="700.00" x2="1140.80" y2="700.00" stroke="#0000ff" stroke-width="1.39"/>
<text x="1144.17" y="703.10" font-size="10.30" textLength="32.11" lengthAdjust="spacingAndGlyphs">x=500</text>
</svg></body></html>
